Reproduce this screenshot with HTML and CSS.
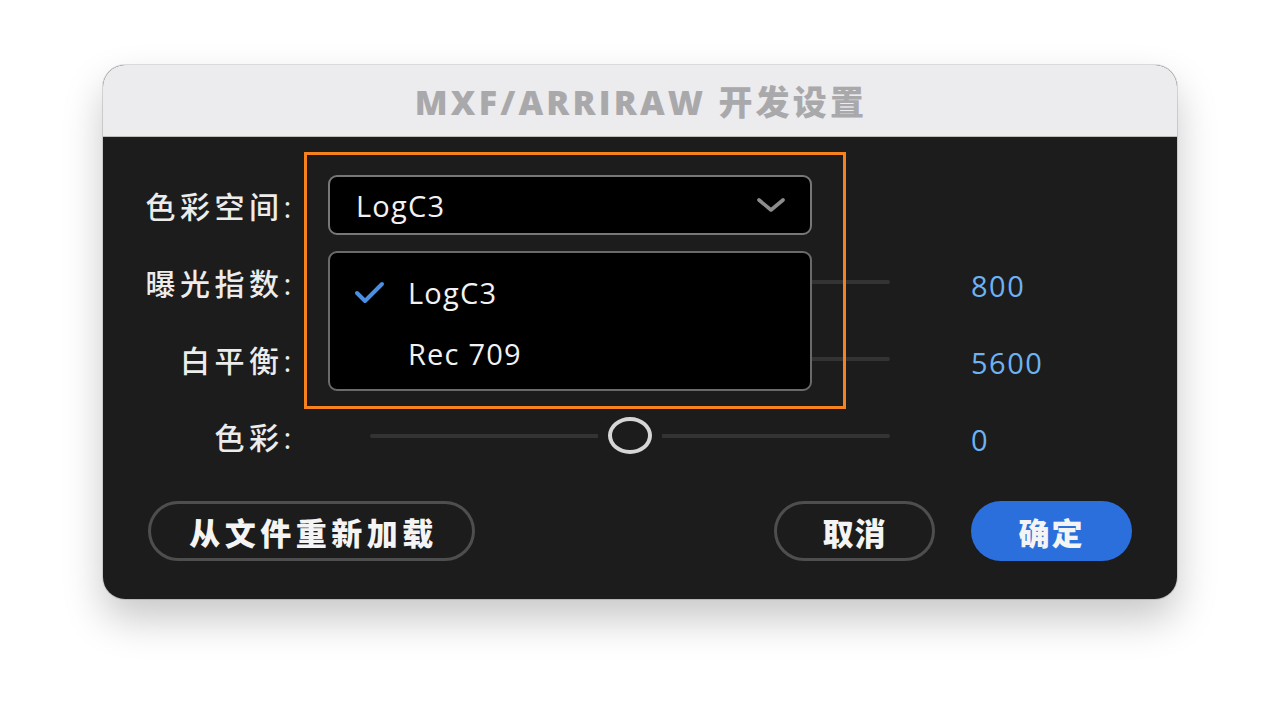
FILE: index.html
```html
<!DOCTYPE html>
<html lang="zh">
<head>
<meta charset="utf-8">
<title>MXF/ARRIRAW 开发设置</title>
<link rel="stylesheet" href="styles.css">
</head>
<body>
<div class="window">
  <div class="titlebar"><span class="title">MXF/ARRIRAW 开发设置</span></div>
  <div class="content">
    <div class="form">
      <div class="label">色彩空间:</div>
      <div class="control">
        <div class="select">
          <span class="select-text">LogC3</span>
          <svg class="chevron" width="30" height="16" viewBox="0 0 30 16"><path d="M3 3 L15 13 L27 3" fill="none" stroke="#8c8c8c" stroke-width="3.6" stroke-linecap="round" stroke-linejoin="round"/></svg>
        </div>
      </div>
      <div class="value"></div>

      <div class="label">曝光指数:</div>
      <div class="control"><div class="slider"><div class="track"></div></div></div>
      <div class="value">800</div>

      <div class="label">白平衡:</div>
      <div class="control"><div class="slider"><div class="track"></div></div></div>
      <div class="value">5600</div>

      <div class="label">色彩:</div>
      <div class="control"><div class="slider"><div class="track"></div><div class="thumb"></div></div></div>
      <div class="value">0</div>
    </div>

    <div class="buttons">
      <button class="btn btn-outline btn-reload">从文件重新加载</button>
      <div class="spacer"></div>
      <button class="btn btn-outline btn-cancel">取消</button>
      <button class="btn btn-primary">确定</button>
    </div>

    <div class="menu">
      <div class="menu-item">
        <svg class="check" width="32" height="24" viewBox="0 0 32 24"><path d="M3 12 L11 20 L28 3" fill="none" stroke="#4a8fe2" stroke-width="4" stroke-linecap="round" stroke-linejoin="round"/></svg>
        <span>LogC3</span>
      </div>
      <div class="menu-item"><span class="nocheck"></span><span>Rec 709</span></div>
    </div>
    <div class="highlight"></div>
  </div>
</div>
</body>
</html>
```
FILE: styles.css
```css
* { box-sizing: border-box; }
html, body { margin: 0; padding: 0; }
body {
  background: #ffffff;
  width: 1280px;
  height: 706px;
  overflow: hidden;
  font-family: "Open Sans", "Noto Sans CJK SC", sans-serif;
}
.window {
  margin: 65px 0 0 103px;
  width: 1074px;
  height: 534px;
  border-radius: 22px;
  overflow: hidden;
  background: #1c1c1c;
  box-shadow: 0 20px 40px rgba(0,0,0,0.22), 0 0 0 1px rgba(0,0,0,0.12);
  display: flex;
  flex-direction: column;
}
.titlebar {
  height: 72px;
  flex: none;
  background: #ecebee;
  border-bottom: 1px solid #bdbdbd;
  display: flex;
  align-items: center;
  justify-content: center;
}
.title {
  color: #a9a9ab;
  font-weight: 800;
  font-size: 34px;
  letter-spacing: 3.2px;
  padding-left: 2px;
}
.content {
  position: relative;
  flex: 1;
  padding-top: 37px;
}
.form {
  display: grid;
  grid-template-columns: 193px 562px auto;
  grid-template-rows: 62px 62px 62px 62px;
  column-gap: 32px;
  row-gap: 15px;
}
.label {
  text-align: right;
  color: #ececec;
  font-size: 30px;
  font-weight: 500;
  letter-spacing: 4.5px;
  display: flex;
  align-items: center;
  justify-content: flex-end;
  padding-right: 0;
}
.control {
  display: flex;
  align-items: center;
}
.value {
  display: flex;
  align-items: center;
  padding-left: 49px;
  color: #6db2f2;
  font-size: 29px;
  letter-spacing: 1.5px;
  padding-top: 6px;
}
.select {
  width: 484px;
  height: 60px;
  background: #000;
  border: 2px solid #777;
  border-radius: 9px;
  display: flex;
  align-items: center;
  justify-content: space-between;
  padding: 0 24px 0 26px;
}
.select-text {
  color: #f2f2f2;
  font-size: 29px;
  font-weight: 500;
  letter-spacing: 1.2px;
}
.chevron { display: block; }
.slider {
  position: relative;
  margin-left: 42px;
  width: 520px;
  height: 40px;
  display: flex;
  align-items: center;
}
.track {
  width: 100%;
  height: 4px;
  border-radius: 2px;
  background: #333333;
}
.thumb {
  position: absolute;
  left: 238px;
  top: 1px;
  width: 44px;
  height: 37px;
  border-radius: 50%;
  border: 4px solid #d6d6d6;
  background: #1c1c1c;
  box-shadow: 0 0 0 10px #1c1c1c;
}
.buttons {
  display: flex;
  align-items: center;
  margin-top: 34px;
  padding: 0 45px 0 45px;
}
.spacer { flex: 1; }
.btn {
  height: 60px;
  border-radius: 30px;
  font-family: "Open Sans", "Noto Sans CJK SC", sans-serif;
  font-weight: 900;
  font-size: 31px;
  color: #f4f4f4;
  display: flex;
  align-items: center;
  justify-content: center;
  padding: 0;
}
.btn-outline {
  background: transparent;
  border: 3px solid #4e4e4e;
}
.btn-reload {
  width: 327px;
  letter-spacing: 4.5px;
  padding-left: 4px;
}
.btn-cancel {
  width: 161px;
  letter-spacing: 1px;
}
.btn-primary {
  width: 161px;
  margin-left: 36px;
  background: #2b6fdc;
  border: none;
  letter-spacing: 2px;
}
.menu {
  position: absolute;
  left: 225px;
  top: 114px;
  width: 484px;
  height: 140px;
  background: #000;
  border: 2px solid #6a6a6a;
  border-radius: 9px;
  padding-top: 9px;
}
.menu-item {
  display: flex;
  align-items: center;
  height: 61px;
  color: #f2f2f2;
  font-size: 29px;
  font-weight: 500;
  letter-spacing: 1.2px;
  padding-left: 24px;
}
.check { display: block; margin-right: 22px; }
.nocheck { display: block; width: 32px; margin-right: 22px; }
.highlight {
  position: absolute;
  left: 201px;
  top: 15px;
  width: 542px;
  height: 257px;
  border: 3px solid #f5821f;
  pointer-events: none;
}
```
